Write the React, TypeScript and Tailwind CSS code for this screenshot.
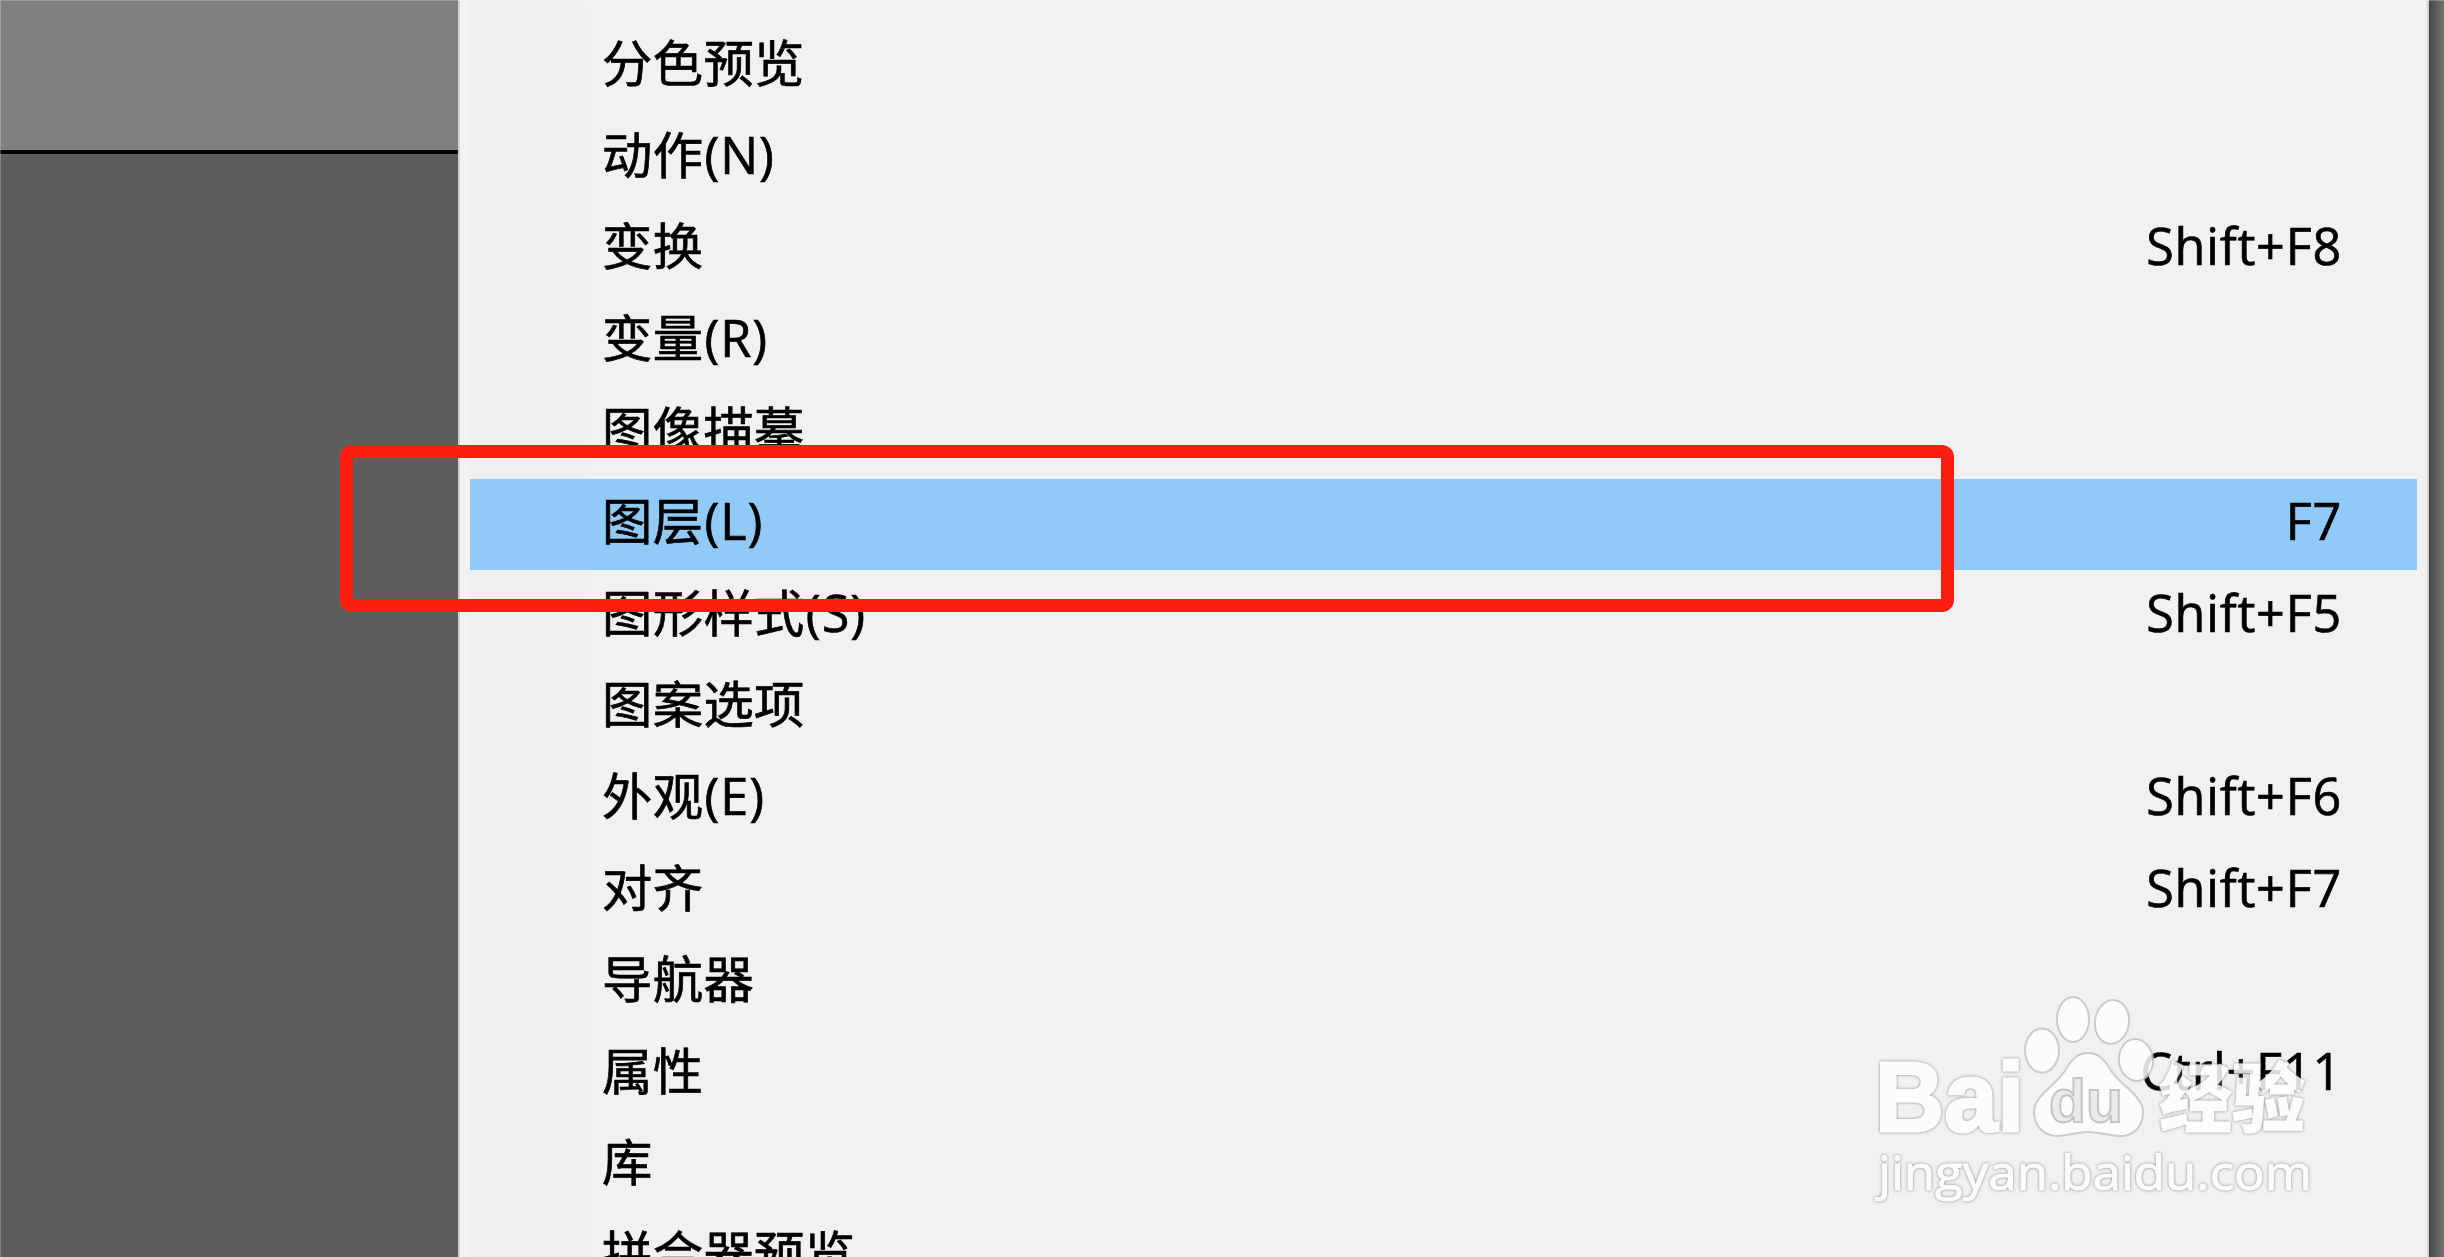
import clsx from "clsx";

const items = [
  { label: "信息" },
  { label: "分色预览" },
  { label: "动作", hotkey: "(N)" },
  { label: "变换", shortcut: "Shift+F8" },
  { label: "变量", hotkey: "(R)" },
  { label: "图像描摹" },
  { label: "图层", hotkey: "(L)", shortcut: "F7", active: true },
  { label: "图形样式", hotkey: "(S)", shortcut: "Shift+F5" },
  { label: "图案选项" },
  { label: "外观", hotkey: "(E)", shortcut: "Shift+F6" },
  { label: "对齐", shortcut: "Shift+F7" },
  { label: "导航器" },
  { label: "属性", shortcut: "Ctrl+F11" },
  { label: "库" },
  { label: "拼合器预览" },
];

function Watermark() {
  return (
    <svg
      className="absolute left-[1864px] top-[980px] h-[240px] w-[480px] opacity-85"
      viewBox="1864 980 480 240"
      fill="#ffffff"
    >
      <g className="drop-shadow-[0_0_1.5px_#777777]">
        <text x="1875" y="1131" fontSize="99" fontWeight="700" stroke="#ffffff" strokeWidth="3" textLength="149" lengthAdjust="spacingAndGlyphs" className="font-['Liberation_Sans',sans-serif]">Bai</text>
        <text x="2159" y="1126" fontSize="75" fontWeight="900" stroke="#ffffff" strokeWidth="1" textLength="146" lengthAdjust="spacingAndGlyphs" className="font-['Noto_Sans_CJK_SC',sans-serif]">经验</text>
        <text x="1878" y="1190" fontSize="48" stroke="#ffffff" strokeWidth="1" textLength="434" lengthAdjust="spacingAndGlyphs" className="font-['Open_Sans',sans-serif]">jingyan.baidu.com</text>
      </g>
      <g stroke="#c6c6c6" strokeWidth="2">
        <ellipse cx="2042" cy="1050.5" rx="17" ry="22" />
        <ellipse cx="2073" cy="1019.5" rx="16" ry="22.5" />
        <ellipse cx="2112" cy="1022" rx="17" ry="22" transform="rotate(8 2112 1022)" />
        <ellipse cx="2136" cy="1060" rx="17" ry="21" transform="rotate(-6 2136 1060)" />
        <path d="M2088 1053C2098 1053 2104 1059 2110 1069C2119 1085 2143 1095 2143 1112C2143 1126 2134 1136 2121 1136C2109 1136 2101 1132 2088 1132C2075 1132 2069 1136 2057 1136C2044 1136 2034 1126 2034 1112C2034 1095 2057 1085 2066 1069C2072 1059 2078 1053 2088 1053Z" />
      </g>
      <text x="2049" y="1122" fontSize="62" fontWeight="700" fill="#e9e9e9" stroke="#bdbdbd" strokeWidth="2" textLength="74" lengthAdjust="spacingAndGlyphs" className="font-['Liberation_Sans',sans-serif]">du</text>
    </svg>
  );
}

export default function App() {
  return (
    <div className="relative flex h-[1257px] w-[2444px] overflow-hidden bg-[#5d5d5d] font-['Open_Sans','Noto_Sans_CJK_SC',sans-serif] text-black">
      <aside className="w-[458px] shrink-0">
        <div className="h-[154px] border-b-4 border-black bg-[#808080]" />
      </aside>

      <nav className="flex w-[1971px] shrink-0 flex-col border-x-2 border-[#d2d2d2] bg-[linear-gradient(to_right,#f2f2f2_10px,#efefef_10px,#efefef_126px,#f1f1f1_126px)] px-[10px]">
        {items.map((item) => (
          <div
            key={item.label}
            className={clsx(
              "flex h-[91.6px] shrink-0 items-center justify-between pb-[6px] pl-[132px] pr-[75px] text-[50.3px] leading-none first:-mt-[71px] [-webkit-text-stroke:0.7px_black]",
              item.active && "bg-[#91c9f7]"
            )}
          >
            <span className="tracking-[0.4px]">
              {item.label}
              {item.hotkey && <span className="ml-px tracking-[1px]">{item.hotkey}</span>}
            </span>
            <span className="tracking-[0.8px]">{item.shortcut}</span>
          </div>
        ))}
      </nav>
      <div className="grow bg-linear-to-r from-[#484848] to-[#737373]" />

      <div className="absolute left-[340px] top-[445px] h-[167px] w-[1614px] rounded-xl border-[13px] border-[#ff1f12]" />
      <Watermark />
      <div className="absolute inset-0 border-l border-t border-white/25" />
    </div>
  );
}
